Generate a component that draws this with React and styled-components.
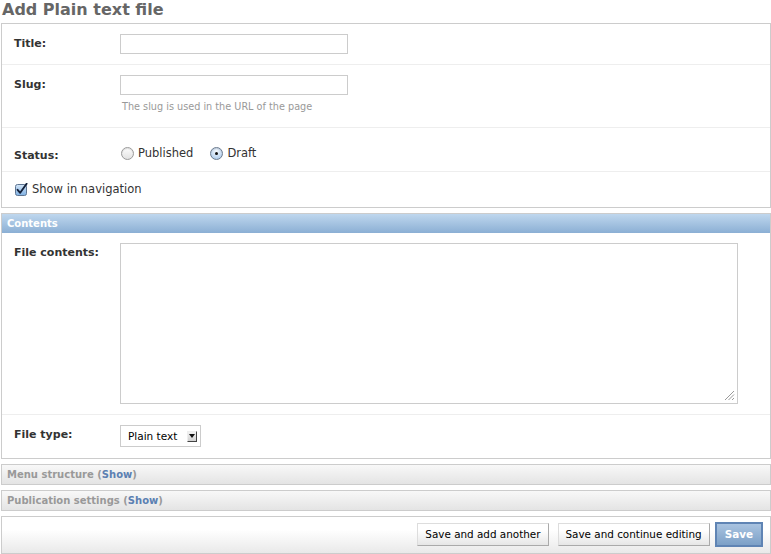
import React from 'react';
import styled, { createGlobalStyle } from 'styled-components';

const GlobalStyle = createGlobalStyle`
  html, body { margin: 0; padding: 0; background: #fff; }
  body { font-family: "DejaVu Sans", Verdana, sans-serif; color: #333; }
  * { box-sizing: border-box; }
`;

const Page = styled.div`
  width: 770px;
  margin-left: 1px;
`;

const Heading = styled.h1`
  margin: 0 0 4px 1px;
  font-size: 16px;
  line-height: 19px;
  font-weight: bold;
  color: #666;
`;

const Module = styled.div`
  border: 1px solid #ccc;
  margin-bottom: 5px;
  background: #fff;
`;

const ModuleTitle = styled.h2`
  margin: 0;
  padding: 3px 5px 2px;
  font-size: 10px;
  line-height: 14px;
  font-weight: bold;
  color: #fff;
  background: linear-gradient(to bottom, #bfd7ee, #8bafd4);
`;

const CollapsedTitle = styled.h2`
  margin: 0;
  padding: 3px 5px 2px;
  font-size: 10px;
  line-height: 14px;
  font-weight: bold;
  color: #999;
  background: linear-gradient(to bottom, #f8f8f8, #e4e4e4);
`;

const ShowLink = styled.a`
  color: #5b80b2;
  text-decoration: none;
`;

const FormRow = styled.div`
  display: flex;
  align-items: flex-start;
  height: ${(p) => (p.$height ? `${p.$height}px` : 'auto')};
  padding: ${(p) => p.$top ?? 10}px 12px ${(p) => p.$bottom ?? 10}px;
  border-bottom: 1px solid #eee;
  &:last-child { border-bottom: none; }
`;

const Label = styled.label`
  flex: none;
  width: 106px;
  padding-top: 3px;
  font-size: 11px;
  line-height: 14px;
  font-weight: bold;
  color: #333;
`;

const Field = styled.div`
  display: flex;
  flex-direction: column;
`;

const TextInput = styled.input`
  display: block;
  width: 228px;
  height: 20px;
  margin: 0;
  padding: 2px 3px;
  border: 1px solid #ccc;
  font-family: inherit;
  font-size: 11px;
  outline: none;
`;

const Help = styled.p`
  margin: 6px 0 4px 2px;
  font-size: 9.7px;
  line-height: 12px;
  color: #999;
`;

const RadioList = styled.ul`
  display: flex;
  gap: 17px;
  list-style: none;
  margin: 0;
  padding: 0 0 0 1px;
`;

const Choice = styled.li`
  display: flex;
  align-items: center;
  gap: 4px;
  font-size: 11.5px;
  line-height: 15px;
  height: 15px;
  color: #333;
`;

const RadioDot = styled.span`
  position: relative;
  flex: none;
  width: 13px;
  height: 13px;
  border-radius: 50%;
  border: 1px solid ${(p) => (p.$checked ? '#6b7b8f' : '#9a9a9a')};
  background: ${(p) =>
    p.$checked
      ? 'radial-gradient(circle at 50% 30%, #f4f8fd 0%, #c9ddf3 55%, #9fc1e6 100%)'
      : 'linear-gradient(to bottom, #fdfdfd, #e2e2e2)'};
  box-shadow: inset 0 1px 1px rgba(0,0,0,0.12);
  &::after {
    content: '';
    display: ${(p) => (p.$checked ? 'block' : 'none')};
    position: absolute;
    left: 4px;
    top: 4px;
    width: 3px;
    height: 3px;
    border-radius: 50%;
    background: #111;
  }
`;

const CheckRow = styled.div`
  display: flex;
  align-items: flex-start;
  gap: 4px;
  padding-left: 1px;
  font-size: 11.5px;
  line-height: 14px;
  color: #333;
`;

const CheckBox = styled.svg`
  flex: none;
  margin-top: 1px;
`;

const TextAreaBox = styled.div`
  position: relative;
  width: 618px;
  height: 161px;
  border: 1px solid #ccc;
`;

const Grip = styled.svg`
  position: absolute;
  right: 2px;
  bottom: 2px;
`;

const SelectBox = styled.div`
  display: flex;
  align-items: center;
  width: 81px;
  height: 22px;
  padding-left: 7px;
  border: 1px solid #ccc;
  font-size: 10.5px;
  color: #000;
`;

const SelectArrow = styled.span`
  display: flex;
  align-items: center;
  justify-content: center;
  margin-left: auto;
  margin-right: 3px;
  width: 10px;
  height: 11px;
  background: linear-gradient(to bottom, #f2f2f2, #d2d2d2);
  border-right: 1px solid #444;
  border-bottom: 1px solid #444;
  border-top: 1px solid #eee;
  border-left: 1px solid #eee;
`;

const SubmitRow = styled.div`
  display: flex;
  justify-content: flex-end;
  align-items: center;
  padding: 5px 7px 6px;
  border: 1px solid #ccc;
  background: linear-gradient(to bottom, #fff 35%, #e9e9e9);
`;

const Button = styled.button`
  margin: 0 0 0 ${(p) => p.$gap ?? 9}px;
  padding: 3px ${(p) => (p.$primary ? 8 : 7)}px;
  font-family: inherit;
  font-size: 10.4px;
  line-height: 15px;
  cursor: pointer;
  border: ${(p) => (p.$primary ? '2px solid #5b80b2' : '1px solid')};
  border-color: ${(p) => (p.$primary ? '#5f84b4' : '#ddd #aaa #aaa #ddd')};
  background: ${(p) =>
    p.$primary
      ? 'linear-gradient(to bottom, #a9c3e0, #7ca0c7)'
      : 'linear-gradient(to bottom, #fff 30%, #e6e6e6)'};
  color: ${(p) => (p.$primary ? '#fff' : '#000')};
  font-weight: ${(p) => (p.$primary ? 'bold' : 'normal')};
`;

function Radio({ checked, children }) {
  return (
    <Choice>
      <RadioDot $checked={checked} />
      {children}
    </Choice>
  );
}

export default function App() {
  return (
    <Page>
      <GlobalStyle />
      <Heading>Add Plain text file</Heading>

      <Module>
        <FormRow>
          <Label>Title:</Label>
          <Field>
            <TextInput type="text" />
          </Field>
        </FormRow>
        <FormRow>
          <Label>Slug:</Label>
          <Field>
            <TextInput type="text" />
            <Help>The slug is used in the URL of the page</Help>
          </Field>
        </FormRow>
        <FormRow $top={18} $bottom={0} $height={44}>
          <Label>Status:</Label>
          <RadioList>
            <Radio>Published</Radio>
            <Radio checked>Draft</Radio>
          </RadioList>
        </FormRow>
        <FormRow $top={10} $bottom={0} $height={35}>
          <CheckRow>
            <CheckBox width="13" height="13" viewBox="0 0 13 13">
              <defs>
                <linearGradient id="cbg" x1="0" y1="0" x2="0" y2="1">
                  <stop offset="0" stopColor="#d4e6f8" />
                  <stop offset="1" stopColor="#7fb0e2" />
                </linearGradient>
              </defs>
              <rect x="0.5" y="1.5" width="11" height="11" rx="2" fill="url(#cbg)" stroke="#5e7592" />
              <path d="M2.6 6.8 L5.2 9.8 L11.6 0.8" fill="none" stroke="#14213a" strokeWidth="1.9" strokeLinecap="round" strokeLinejoin="round" />
            </CheckBox>
            Show in navigation
          </CheckRow>
        </FormRow>
      </Module>

      <Module>
        <ModuleTitle>Contents</ModuleTitle>
        <FormRow>
          <Label>File contents:</Label>
          <TextAreaBox>
            <Grip width="12" height="12" viewBox="0 0 12 12">
              <path d="M11 2 L2 11 M11 5.5 L5.5 11 M11 9 L9 11" stroke="#999" strokeWidth="1" />
            </Grip>
          </TextAreaBox>
        </FormRow>
        <FormRow $bottom={11}>
          <Label>File type:</Label>
          <SelectBox>
            Plain text
            <SelectArrow>
              <svg width="6" height="4" viewBox="0 0 6 4">
                <path d="M0 0 H6 L3 4 Z" fill="#111" />
              </svg>
            </SelectArrow>
          </SelectBox>
        </FormRow>
      </Module>

      <Module>
        <CollapsedTitle>
          Menu structure (<ShowLink href="#">Show</ShowLink>)
        </CollapsedTitle>
      </Module>

      <Module>
        <CollapsedTitle>
          Publication settings (<ShowLink href="#">Show</ShowLink>)
        </CollapsedTitle>
      </Module>

      <SubmitRow>
        <Button type="button" $gap={0}>Save and add another</Button>
        <Button type="button" $gap={9}>Save and continue editing</Button>
        <Button type="button" $gap={5} $primary>Save</Button>
      </SubmitRow>
    </Page>
  );
}
